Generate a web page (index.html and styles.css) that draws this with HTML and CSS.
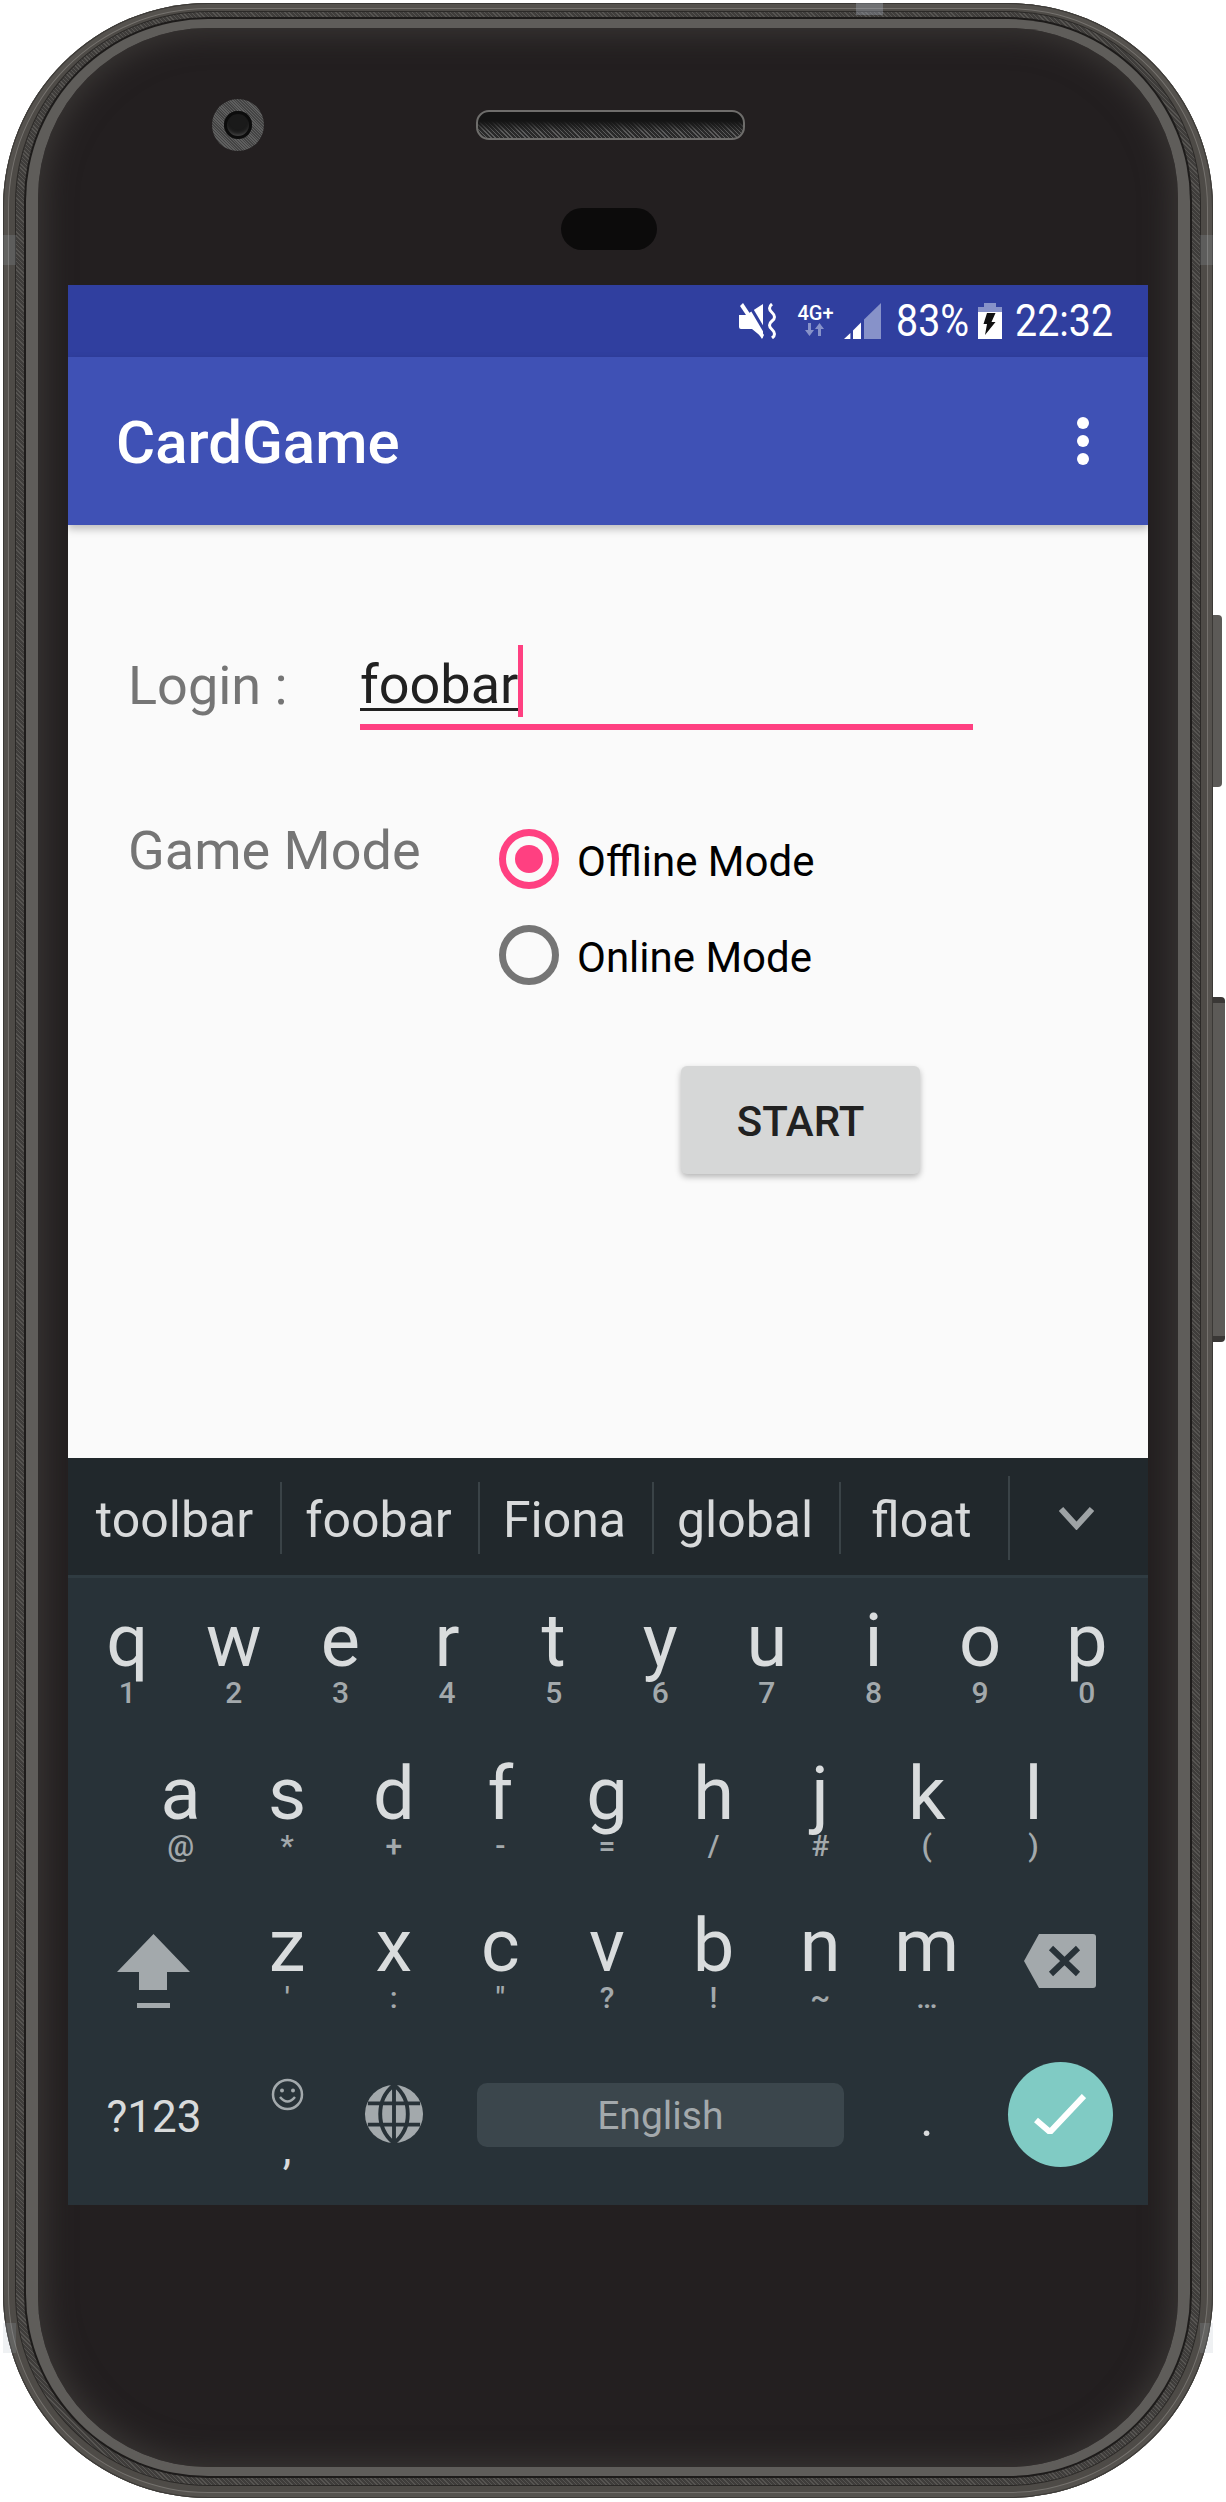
FILE: index.html
```html
<!DOCTYPE html>
<html lang="en">

<head>
    <meta charset="UTF-8">
    <meta name="viewport" content="width=device-width, initial-scale=1.0">
    <title>CardGame</title>
    <link rel="stylesheet" href="styles.css">
</head>

<body>
    <div class="device">
        <div class="shell">
            <i class="antenna antenna-top"></i>
            <i class="antenna antenna-left"></i>
            <i class="antenna antenna-right"></i>
            <i class="antenna antenna-left-low"></i>
            <i class="antenna antenna-right-low"></i>
            <div class="band">
                <div class="lip">
                    <div class="face">
                        <div class="earpiece">
                            <div class="camera"><div class="lens"></div></div>
                            <div class="speaker"></div>
                        </div>
                        <div class="sensor"></div>

                        <div class="screen">
                            <div class="statusbar">
                                <svg class="icon-mute" width="39" height="36" viewBox="0 0 39 36">
                                    <path fill="#fff" d="M0 12h7L24 1v34L13 26H2a2 2 0 0 1-2-2z" />
                                    <path stroke="#303f9f" stroke-width="3" d="M12 5l16 27" />
                                    <path fill="#fff" d="M4 0l21 32-2 4L1 3z" />
                                    <path fill="none" stroke="#fff" stroke-width="3" d="M33 1q-5 4 0 8.500t0 8.500 0 8.500 0 8.500" />
                                </svg>
                                <div class="network">
                                    <span class="network-label">4G+</span>
                                    <svg width="22" height="13" viewBox="0 0 22 13">
                                        <path fill="#8792c9" d="M3 0h3v7h3l-4.500 6L0 7h3zM16 13h-3V6h-3l4.500-6L19 6h-3z" />
                                    </svg>
                                </div>
                                <svg class="icon-signal" width="37" height="36" viewBox="0 0 37 36">
                                    <path fill="#fff" d="M0 36l6.400-6v6zM9 27.500l8-8V36H9z" />
                                    <path fill="#8792c9" d="M20 16.500L37 0v36H20z" />
                                </svg>
                                <span class="status-text status-battery">83%</span>
                                <svg class="icon-battery" width="24" height="36" viewBox="0 0 24 36">
                                    <path fill="#8792c9" d="M6 0h12v4h6v6H0V4h6z" />
                                    <path fill="#fff" d="M0 9h24v27H0z" />
                                    <path fill="#111" d="M9 10h8.500l-4 9h4L7 32l2-11H5.500z" />
                                </svg>
                                <span class="status-text status-clock">22:32</span>
                            </div>

                            <div class="appbar">
                                <span class="app-title">CardGame</span>
                                <div class="overflow-menu"><i></i><i></i><i></i></div>
                            </div>

                            <div class="content">
                                <div class="login-row">
                                    <span class="form-label login-label">Login :</span>
                                    <div class="login-field">
                                        <span class="login-value">foobar<i class="cursor"></i></span>
                                    </div>
                                </div>
                                <div class="mode-row">
                                    <span class="form-label mode-label">Game Mode</span>
                                    <div class="radio-group">
                                        <div class="radio-row">
                                            <span class="radio radio-checked"></span>
                                            <span class="radio-text">Offline Mode</span>
                                        </div>
                                        <div class="radio-row">
                                            <span class="radio"></span>
                                            <span class="radio-text">Online Mode</span>
                                        </div>
                                    </div>
                                </div>
                                <button class="start-button">START</button>
                            </div>

                            <div class="keyboard">
                                <div class="suggestions">
                                    <span class="word word-1">toolbar</span>
                                    <i class="divider"></i>
                                    <span class="word word-2">foobar</span>
                                    <i class="divider"></i>
                                    <span class="word word-3">Fiona</span>
                                    <i class="divider"></i>
                                    <span class="word word-4">global</span>
                                    <i class="divider"></i>
                                    <span class="word word-5">float</span>
                                    <i class="divider divider-tall"></i>
                                    <div class="word-more">
                                        <svg width="35" height="23" viewBox="0 0 35 23">
                                            <path fill="none" stroke="#9ea3a5" stroke-width="6" d="M2 2l15.500 17L33 2" />
                                        </svg>
                                    </div>
                                </div>

                                <div class="keys">
                                    <div class="key"><span class="letter">q</span><span class="hint">1</span></div>
                                    <div class="key"><span class="letter">w</span><span class="hint">2</span></div>
                                    <div class="key"><span class="letter">e</span><span class="hint">3</span></div>
                                    <div class="key"><span class="letter">r</span><span class="hint">4</span></div>
                                    <div class="key"><span class="letter">t</span><span class="hint">5</span></div>
                                    <div class="key"><span class="letter">y</span><span class="hint">6</span></div>
                                    <div class="key"><span class="letter">u</span><span class="hint">7</span></div>
                                    <div class="key"><span class="letter">i</span><span class="hint">8</span></div>
                                    <div class="key"><span class="letter">o</span><span class="hint">9</span></div>
                                    <div class="key"><span class="letter">p</span><span class="hint">0</span></div>

                                    <div class="key key-indent"><span class="letter">a</span><span class="hint">@</span></div>
                                    <div class="key"><span class="letter">s</span><span class="hint">*</span></div>
                                    <div class="key"><span class="letter">d</span><span class="hint">+</span></div>
                                    <div class="key"><span class="letter">f</span><span class="hint">-</span></div>
                                    <div class="key"><span class="letter">g</span><span class="hint">=</span></div>
                                    <div class="key"><span class="letter">h</span><span class="hint">/</span></div>
                                    <div class="key"><span class="letter">j</span><span class="hint">#</span></div>
                                    <div class="key"><span class="letter">k</span><span class="hint">(</span></div>
                                    <div class="key key-row-end"><span class="letter">l</span><span class="hint">)</span></div>

                                    <div class="key key-wide key-shift">
                                        <svg width="73" height="74" viewBox="0 0 73 74">
                                            <path fill="#a3a9ac" d="M36.500 0L73 38H50v18H22V38H0zM20 69h33v5H20z" />
                                        </svg>
                                    </div>
                                    <div class="key"><span class="letter">z</span><span class="hint">'</span></div>
                                    <div class="key"><span class="letter">x</span><span class="hint">:</span></div>
                                    <div class="key"><span class="letter">c</span><span class="hint">"</span></div>
                                    <div class="key"><span class="letter">v</span><span class="hint">?</span></div>
                                    <div class="key"><span class="letter">b</span><span class="hint">!</span></div>
                                    <div class="key"><span class="letter">n</span><span class="hint">~</span></div>
                                    <div class="key"><span class="letter">m</span><span class="hint">…</span></div>
                                    <div class="key key-wide key-back">
                                        <svg width="72" height="54" viewBox="0 0 72 54">
                                            <path fill="#a3a9ac" d="M15 0h54a3 3 0 0 1 3 3v48a3 3 0 0 1-3 3H15L0 27z" />
                                            <path fill="none" stroke="#283238" stroke-width="6" d="M27 14l27 26M54 14L27 40" />
                                        </svg>
                                    </div>

                                    <div class="key key-wide key-symbols">?123</div>
                                    <div class="key key-emoji">
                                        <svg width="33" height="33" viewBox="0 0 33 33">
                                            <circle cx="16.500" cy="16.500" r="14.500" fill="none" stroke="#a3a9ac" stroke-width="2.500" />
                                            <circle cx="11" cy="12.500" r="2" fill="#a3a9ac" />
                                            <circle cx="22" cy="12.500" r="2" fill="#a3a9ac" />
                                            <path fill="none" stroke="#a3a9ac" stroke-width="2.500" d="M9 19q7.500 9 15 0" />
                                        </svg>
                                        <span class="comma">,</span>
                                    </div>
                                    <div class="key key-globe">
                                        <svg width="60" height="60" viewBox="0 0 62 62">
                                            <circle cx="31" cy="31" r="30" fill="#a3a9ac" />
                                            <path fill="none" stroke="#283238" stroke-width="4" d="M31 1v60M4 20h54M4 42h54M31 1C12 16 12 46 31 61M31 1c19 15 19 45 0 60" />
                                        </svg>
                                    </div>
                                    <div class="key key-space"><div class="space-bar">English</div></div>
                                    <div class="key key-period">.</div>
                                    <div class="key key-wide key-enter">
                                        <div class="enter-button">
                                            <svg width="52" height="40" viewBox="0 0 52 40">
                                                <path fill="none" stroke="#fff" stroke-width="6" d="M2 26l14 12L50 2" />
                                            </svg>
                                        </div>
                                    </div>
                                </div>
                            </div>
                        </div>
                    </div>
                </div>
            </div>
        </div>
        <div class="side-keys">
            <div class="side-key side-key-power"></div>
            <div class="side-key side-key-volume"></div>
        </div>
    </div>
</body>

</html>
```

FILE: styles.css
```css
body {
    margin: 0;
    background-color: #fff;
    font-family: Roboto, "Liberation Sans", sans-serif;
}

i {
    display: block;
}

/* device frame */
.device {
    display: flex;
    width: 1226px;
    height: 2502px;
    box-sizing: border-box;
    padding: 3px 0 4px 3px;
    overflow: hidden;
}

.shell {
    position: relative;
    width: 1210px;
    height: 2495px;
    box-sizing: border-box;
    padding: 9px 13px 13px 13px;
    border-radius: 205px;
    background-color: #4e4b47;
    box-shadow: inset 0 0 0 1px #3b3936, inset 0 0 0 5px #55524e, inset 0 0 0 6px #75726e;
}

.antenna {
    position: absolute;
    background-color: rgba(165, 175, 190, 0.18);
}

.antenna-top {
    left: 853px;
    top: 0;
    width: 27px;
    height: 12px;
    background-color: rgba(165, 175, 190, 0.35);
}

.antenna-left,
.antenna-right,
.antenna-left-low,
.antenna-right-low {
    width: 13px;
    height: 30px;
}

.antenna-left {
    left: 0;
    top: 232px;
}

.antenna-right {
    right: 0;
    top: 232px;
}

.antenna-left-low {
    left: 0;
    top: 2320px;
}

.antenna-right-low {
    right: 0;
    top: 2320px;
}

.band {
    height: 100%;
    box-sizing: border-box;
    padding: 7px 10px 9px 10px;
    border-radius: 192px;
    background-color: #4c4a48;
    background-image: repeating-linear-gradient(45deg, #575552 0, #575552 1px, #3f3d3b 1px, #3f3d3b 3px);
    box-shadow: 0 0 0 1px #2b2927;
}

.lip {
    height: 100%;
    box-sizing: border-box;
    padding: 9px 12px 9px 12px;
    border-radius: 182px;
    background-color: #5f5d5a;
    box-shadow: 0 0 0 2px #1d1b1a;
}

.face {
    height: 100%;
    box-sizing: border-box;
    padding: 0 30px;
    border-radius: 170px;
    background-color: #231f20;
    box-shadow: inset 0 0 30px 6px #3a3735;
}

/* earpiece, camera, sensor */
.earpiece {
    display: flex;
    align-items: center;
    height: 60px;
    padding: 67px 0 0 144px;
}

.camera {
    display: flex;
    align-items: center;
    justify-content: center;
    width: 52px;
    height: 52px;
    border-radius: 50%;
    background-color: #4f4f4f;
    background-image: repeating-linear-gradient(45deg, #5f5f5f 0, #5f5f5f 1px, #444 1px, #444 2px);
}

.lens {
    width: 28px;
    height: 28px;
    border-radius: 50%;
    background-color: #1a1a1a;
    box-shadow: inset 0 0 0 3px #0c0c0c, inset 0 -4px 4px #555;
}

.speaker {
    width: 265px;
    height: 26px;
    margin-left: 212px;
    border: 2px solid #6e6d6b;
    border-radius: 13px;
    background-color: #333;
    background-image: linear-gradient(#141414 35%, rgba(20, 20, 20, 0) 75%), repeating-linear-gradient(45deg, #5c5c5c 0, #5c5c5c 1px, #2a2a2a 1px, #2a2a2a 3px);
}

.sensor {
    width: 96px;
    height: 42px;
    margin: 53px 0 0 493px;
    border-radius: 21px;
    background-color: #0c0b0b;
}

/* screen */
.screen {
    display: flex;
    flex-direction: column;
    width: 1080px;
    height: 1920px;
    margin-top: 35px;
    overflow: hidden;
}

.statusbar {
    display: flex;
    align-items: center;
    height: 72px;
    box-sizing: border-box;
    padding: 0 35px 0 671px;
    background-color: #303f9f;
    color: #fff;
}

.network {
    display: flex;
    flex-direction: column;
    align-items: center;
    width: 37px;
    height: 36px;
    margin-left: 19px;
}

.network-label {
    font-size: 20px;
    font-weight: 500;
    line-height: 20px;
}

.icon-signal {
    margin-left: 10px;
}

.status-text {
    font-size: 44px;
    line-height: 44px;
    white-space: nowrap;
    transform-origin: left center;
    transform: scaleX(0.895);
}

.status-battery {
    width: 71px;
    margin-left: 15px;
}

.icon-battery {
    margin-left: 11px;
}

.status-clock {
    width: 98px;
    margin-left: 13px;
}

.appbar {
    position: relative;
    z-index: 1;
    display: flex;
    align-items: center;
    justify-content: space-between;
    height: 168px;
    box-sizing: border-box;
    padding: 0 59px 0 48px;
    background-color: #3f51b5;
    box-shadow: 0 4px 8px rgba(0, 0, 0, 0.25);
}

.app-title {
    padding-top: 3px;
    font-size: 60px;
    font-weight: 500;
    line-height: 60px;
    color: #fff;
}

.overflow-menu {
    display: flex;
    flex-direction: column;
    gap: 6px;
}

.overflow-menu i {
    width: 12px;
    height: 12px;
    border-radius: 50%;
    background-color: #fff;
}

/* form */
.content {
    flex: 1;
    box-sizing: border-box;
    padding: 133px 0 0 60px;
    background-color: #fafafa;
}

.login-row {
    display: flex;
}

.form-label {
    font-size: 54px;
    line-height: 54px;
    color: #757575;
}

.login-label {
    width: 232px;
    padding-top: 1px;
}

.login-field {
    width: 613px;
    height: 66px;
    border-bottom: 6px solid #ff4081;
}

.login-value {
    position: relative;
    display: inline-block;
    font-size: 54px;
    line-height: 54px;
    color: #212121;
    text-decoration: underline;
    text-decoration-thickness: 3px;
    text-underline-offset: 5px;
    text-decoration-skip-ink: none;
}

.cursor {
    position: absolute;
    top: -13px;
    right: -5px;
    width: 5px;
    height: 72px;
    background-color: #ff4081;
}

.mode-row {
    display: flex;
    margin-top: 81px;
}

.mode-label {
    width: 371px;
    margin-top: 13px;
}

.radio-row {
    display: flex;
    align-items: center;
    height: 96px;
}

.radio {
    display: flex;
    align-items: center;
    justify-content: center;
    width: 60px;
    height: 60px;
    box-sizing: border-box;
    border: 7px solid #757575;
    border-radius: 50%;
}

.radio-checked {
    border-color: #ff4081;
}

.radio-checked::after {
    content: "";
    width: 28px;
    height: 28px;
    border-radius: 50%;
    background-color: #ff4081;
}

.radio-text {
    margin: 5px 0 0 18px;
    font-size: 42px;
    line-height: 42px;
    color: #000;
}

.start-button {
    display: block;
    width: 239px;
    height: 108px;
    margin: 63px 0 0 553px;
    padding: 3px 0 0;
    border: none;
    border-radius: 6px;
    background-color: #d6d7d7;
    box-shadow: 0 3px 6px rgba(0, 0, 0, 0.28);
    font-family: inherit;
    font-size: 42px;
    font-weight: 500;
    color: #212121;
}

/* keyboard */
.keyboard {
    height: 747px;
    background-color: #283238;
}

.suggestions {
    display: flex;
    align-items: center;
    height: 120px;
    box-sizing: border-box;
    padding-top: 3px;
    border-bottom: 3px solid #2f3b41;
    background-color: #21282c;
}

.word {
    padding-top: 4px;
    font-size: 50px;
    line-height: 50px;
    text-align: center;
    color: #d8dadb;
}

.word-1 {
    width: 212px;
    text-indent: 1px;
}

.word-2 {
    width: 196px;
    text-indent: -3px;
}

.word-3 {
    width: 172px;
    text-indent: -3px;
}

.word-4 {
    width: 185px;
    text-indent: -3px;
}

.word-5 {
    width: 167px;
    text-indent: -6px;
}

.divider {
    width: 2px;
    height: 72px;
    background-color: #3a4347;
}

.divider-tall {
    height: 84px;
}

.word-more {
    display: flex;
    justify-content: center;
    flex: 1;
    padding-right: 6px;
}

.keys {
    display: grid;
    grid-template-columns: repeat(20, 1fr);
    grid-template-rows: repeat(3, 152.5px) 1fr;
    height: 604px;
    box-sizing: border-box;
    padding: 26px 8px 0 6px;
}

.key {
    display: flex;
    flex-direction: column;
    align-items: center;
    grid-column: span 2;
}

.key-indent {
    grid-column: 2 / span 2;
}

.key-row-end {
    grid-column-end: span 2;
}

.key-wide {
    grid-column: span 3;
}

.letter {
    font-size: 74px;
    line-height: 74px;
    color: #d9dcdd;
}

.hint {
    font-size: 30px;
    font-weight: 500;
    line-height: 30px;
    color: #a3a9ac;
}

.key-shift,
.key-back {
    padding-top: 25px;
}

.key-symbols {
    padding-top: 33px;
    font-size: 44px;
    line-height: 44px;
    color: #d8dadb;
}

.key-emoji {
    padding-top: 16px;
}

.comma {
    margin-top: 16px;
    font-size: 44px;
    line-height: 44px;
    color: #d8dadb;
}

.key-globe {
    padding-top: 22px;
}

.key-space {
    grid-column: span 8;
    padding-top: 21px;
}

.space-bar {
    width: 367px;
    height: 64px;
    padding-top: 1px;
    box-sizing: border-box;
    border-radius: 10px;
    background-color: #3b464c;
    font-size: 39px;
    line-height: 64px;
    text-align: center;
    color: #a3a9ac;
}

.key-period {
    padding-top: 32px;
    font-size: 50px;
    line-height: 50px;
    color: #d8dadb;
}

.key-enter {
    padding-top: 0;
}

.enter-button {
    display: flex;
    align-items: center;
    justify-content: center;
    width: 105px;
    height: 105px;
    border-radius: 50%;
    background-color: #80cbc4;
}

/* side buttons */
.side-keys {
    display: flex;
    flex-direction: column;
}

.side-key {
    border-radius: 0 4px 4px 0;
    background-color: #5c5a57;
}

.side-key-power {
    width: 9px;
    height: 172px;
    margin-top: 612px;
}

.side-key-volume {
    width: 12px;
    height: 333px;
    margin-top: 210px;
    border-top: 6px solid #3a3836;
    border-bottom: 6px solid #3a3836;
}
```
